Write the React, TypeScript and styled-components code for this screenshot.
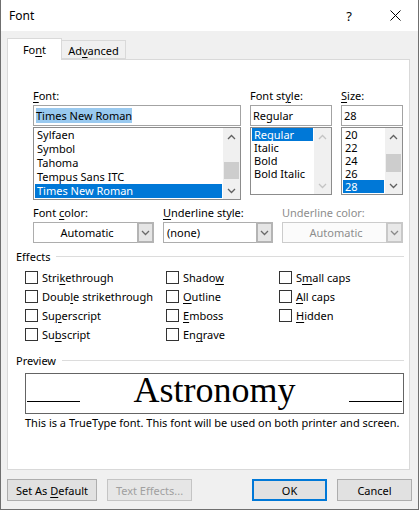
import React from "react";
import styled, { createGlobalStyle } from "styled-components";

const GlobalStyle = createGlobalStyle`
  html, body {
    margin: 0;
    padding: 0;
    background: #f0f0f0;
  }
  * {
    box-sizing: border-box;
  }
`;

const FONTS = ["Sylfaen", "Symbol", "Tahoma", "Tempus Sans ITC", "Times New Roman"];
const STYLES = ["Regular", "Italic", "Bold", "Bold Italic"];
const SIZES = ["20", "22", "24", "26", "28"];

const EFFECTS = [
  "Stri&kethrough",
  "Doub&le strikethrough",
  "Su&perscript",
  "Su&bscript",
  "Shado&w",
  "&Outline",
  "&Emboss",
  "En&grave",
  "S&mall caps",
  "&All caps",
  "&Hidden",
];

// "&" marks the access key letter, as in the Win32 resource
const withKey = (text: string) => {
  const i = text.indexOf("&");
  if (i < 0) return text;
  return (
    <>
      {text.slice(0, i)}
      <Key>{text[i + 1]}</Key>
      {text.slice(i + 2)}
    </>
  );
};

const Chevron = ({ up = false, color = "#606060" }) => (
  <svg width="9" height="6" viewBox="0 0 9 6">
    <polyline
      points={up ? "1,5 4.5,1.5 8,5" : "1,1 4.5,4.5 8,1"}
      fill="none"
      stroke={color}
      strokeWidth="1.3"
    />
  </svg>
);

const ScrollBar = ({ thumbTop = 0, thumbHeight = 0, disabled = false }) => {
  const color = disabled ? "#c4c4c4" : "#606060";
  return (
    <StyledScrollBar>
      <ArrowButton>
        <Chevron up color={color} />
      </ArrowButton>
      <Track>
        {thumbHeight > 0 && (
          <Thumb style={{ marginTop: thumbTop, height: thumbHeight }} />
        )}
      </Track>
      <ArrowButton>
        <Chevron color={color} />
      </ArrowButton>
    </StyledScrollBar>
  );
};

const ListBox = ({ items, selected, rowHeight, height, thumbTop = 0, thumbHeight = 0, disabled = false }) => (
  <StyledListBox $height={height}>
    <Items>
      {items.map((item, i) => (
        <Row key={item} $rowHeight={rowHeight} $selected={i === selected}>
          {item}
        </Row>
      ))}
    </Items>
    <ScrollBar thumbTop={thumbTop} thumbHeight={thumbHeight} disabled={disabled} />
  </StyledListBox>
);

const Combo = ({ value, centered = false, disabled = false }) => (
  <StyledCombo $disabled={disabled}>
    <ComboValue $centered={centered}>{value}</ComboValue>
    <DropButton $disabled={disabled}>
      <Chevron color={disabled ? "#8a8a8a" : "#6a6a6a"} />
    </DropButton>
  </StyledCombo>
);

export default function App() {
  return (
    <>
      <GlobalStyle />
      <Window>
        <TitleBar>
          <Title>Font</Title>
          <CaptionButton>?</CaptionButton>
          <CaptionButton>
            <svg width="11" height="11" viewBox="0 0 11 11">
              <path d="M0.5 0.5 L10.5 10.5 M10.5 0.5 L0.5 10.5" stroke="#000" strokeWidth="1" />
            </svg>
          </CaptionButton>
        </TitleBar>

        <TabStrip>
          <Tab $active>{withKey("Fo&nt")}</Tab>
          <Tab>{withKey("Ad&vanced")}</Tab>
        </TabStrip>

        <Panel>
          <FontGrid>
            <Field>
              <Label>{withKey("&Font:")}</Label>
              <TextBox>
                <Highlight>Times New Roman</Highlight>
              </TextBox>
              <ListBox items={FONTS} selected={4} rowHeight={14} height={73} thumbTop={17} thumbHeight={17} />
            </Field>
            <Field>
              <Label>{withKey("Font st&yle:")}</Label>
              <TextBox>Regular</TextBox>
              <ListBox items={STYLES} selected={0} rowHeight={13} height={68} disabled />
            </Field>
            <Field>
              <Label>{withKey("&Size:")}</Label>
              <TextBox>28</TextBox>
              <ListBox items={SIZES} selected={4} rowHeight={13} height={68} thumbTop={9} thumbHeight={18} />
            </Field>
          </FontGrid>

          <ComboGrid>
            <Field>
              <Label>{withKey("Font &color:")}</Label>
              <Combo value="Automatic" centered />
            </Field>
            <Field>
              <Label>{withKey("&Underline style:")}</Label>
              <Combo value="(none)" />
            </Field>
            <Field>
              <Label $disabled>Underline color:</Label>
              <Combo value="Automatic" centered disabled />
            </Field>
          </ComboGrid>

          <GroupHeader>
            <span>Effects</span>
            <Rule />
          </GroupHeader>
          <EffectsGrid>
            {EFFECTS.map((e) => (
              <CheckRow key={e}>
                <CheckBox />
                <span>{withKey(e)}</span>
              </CheckRow>
            ))}
          </EffectsGrid>

          <GroupHeader $gap={8}>
            <span>Preview</span>
            <Rule />
          </GroupHeader>
          <PreviewBox>
            <PreviewLine />
            <PreviewText>Astronomy</PreviewText>
            <PreviewLine />
          </PreviewBox>
          <Note>This is a TrueType font. This font will be used on both printer and screen.</Note>
        </Panel>

        <ButtonRow>
          <Button $width={90}>{withKey("Set As &Default")}</Button>
          <Button $width={85} disabled>
            Text Effects...
          </Button>
          <Spacer />
          <Button $width={75} $default>
            OK
          </Button>
          <Button $width={75}>Cancel</Button>
        </ButtonRow>
      </Window>
    </>
  );
}

const Window = styled.div`
  width: 419px;
  height: 510px;
  display: flex;
  flex-direction: column;
  background: #f0f0f0;
  border: 1px solid #6f6f6f;
  border-top: none;
  font-family: "Noto Sans", "Liberation Sans", sans-serif;
  font-size: 11px;
  color: #000;
`;

const TitleBar = styled.div`
  height: 31px;
  display: flex;
  align-items: center;
  background: #fff;
`;

const Title = styled.div`
  flex: 1;
  padding-left: 8px;
  font-size: 12px;
`;

const CaptionButton = styled.div`
  width: 46px;
  height: 31px;
  display: flex;
  align-items: center;
  justify-content: center;
  font-size: 13px;
`;

const TabStrip = styled.div`
  display: flex;
  align-items: flex-end;
  padding: 7px 0 0 6px;
`;

const Tab = styled.div<{ $active?: boolean }>`
  position: relative;
  z-index: 1;
  display: flex;
  align-items: center;
  justify-content: center;
  height: ${(p) => (p.$active ? 22 : 19)}px;
  width: ${(p) => (p.$active ? 55 : 64)}px;
  margin-bottom: ${(p) => (p.$active ? -1 : 0)}px;
  padding-top: ${(p) => (p.$active ? 0 : 1)}px;
  background: ${(p) => (p.$active ? "#fff" : "#f0f0f0")};
  border: 1px solid #d9d9d9;
  border-bottom: ${(p) => (p.$active ? "none" : "1px solid #d9d9d9")};
  border-left: ${(p) => (p.$active ? "1px solid #d9d9d9" : "none")};
`;

const Panel = styled.div`
  width: 403px;
  height: 411px;
  margin-left: 6px;
  background: #fff;
  border: 1px solid #d9d9d9;
  display: flex;
  flex-direction: column;
`;

const Key = styled.span`
  text-decoration: underline;
  text-underline-offset: 2px;
`;

const FontGrid = styled.div`
  display: grid;
  grid-template-columns: 208px 82px 62px;
  column-gap: 9px;
  align-items: start;
  margin: 28px 0 0 25px;
`;

const ComboGrid = styled.div`
  display: grid;
  grid-template-columns: 121px 110px 121px;
  column-gap: 9px;
  margin: 5px 0 0 25px;
`;

const Field = styled.div`
  display: flex;
  flex-direction: column;
`;

const Label = styled.div<{ $disabled?: boolean }>`
  height: 16px;
  line-height: 16px;
  margin-bottom: 1px;
  color: ${(p) => (p.$disabled ? "#8d8d8d" : "#000")};
`;

const TextBox = styled.div`
  height: 21px;
  display: flex;
  align-items: center;
  padding-left: 2px;
  border: 1px solid #a3a3a3;
  background: #fff;
  white-space: nowrap;
`;

const Highlight = styled.span`
  background: #99c9ef;
  line-height: 15px;
`;

const StyledListBox = styled.div<{ $height: number }>`
  height: ${(p) => p.$height}px;
  margin-top: 1px;
  display: flex;
  border: 1px solid #8c8c8c;
  background: #fff;
`;

const Items = styled.div`
  flex: 1;
  min-width: 0;
  padding: 0 1px;
`;

const Row = styled.div<{ $rowHeight: number; $selected: boolean }>`
  height: ${(p) => p.$rowHeight}px;
  line-height: ${(p) => p.$rowHeight}px;
  padding-left: 2px;
  white-space: nowrap;
  overflow: hidden;
  background: ${(p) => (p.$selected ? "#0078d7" : "transparent")};
  color: ${(p) => (p.$selected ? "#fff" : "#000")};
`;

const StyledScrollBar = styled.div`
  width: 17px;
  display: flex;
  flex-direction: column;
  background: #f0f0f0;
`;

const ArrowButton = styled.div`
  height: 17px;
  display: flex;
  align-items: center;
  justify-content: center;
`;

const Track = styled.div`
  flex: 1;
  display: flex;
  flex-direction: column;
`;

const Thumb = styled.div`
  margin: 0 1px;
  background: #cdcdcd;
`;

const StyledCombo = styled.div<{ $disabled: boolean }>`
  height: 21px;
  display: flex;
  border: 1px solid ${(p) => (p.$disabled ? "#cccccc" : "#adadad")};
  background: ${(p) => (p.$disabled ? "#fbfbfb" : "#fff")};
  color: ${(p) => (p.$disabled ? "#8d8d8d" : "#000")};
`;

const ComboValue = styled.div<{ $centered: boolean }>`
  flex: 1;
  display: flex;
  align-items: center;
  justify-content: ${(p) => (p.$centered ? "center" : "flex-start")};
  padding-left: 3px;
`;

const DropButton = styled.div<{ $disabled: boolean }>`
  width: 17px;
  margin: -1px -1px -1px 0;
  display: flex;
  align-items: center;
  justify-content: center;
  background: ${(p) => (p.$disabled ? "#e8e8e8" : "#e5e5e5")};
  border: 2px solid ${(p) => (p.$disabled ? "#c8c8c8" : "#b4b4b4")};
`;

const GroupHeader = styled.div<{ $gap?: number }>`
  display: flex;
  align-items: center;
  height: 16px;
  margin: ${(p) => p.$gap ?? 5}px 5px 0 8px;
  color: #000;
`;

const Rule = styled.div`
  flex: 1;
  height: 1px;
  margin-left: 6px;
  background: #dcdcdc;
`;

const EffectsGrid = styled.div`
  display: grid;
  grid-template-columns: 141px 113px 1fr;
  grid-template-rows: repeat(4, 19px);
  grid-auto-flow: column;
  margin: 4px 0 0 17px;
`;

const CheckRow = styled.div`
  display: flex;
  align-items: center;
`;

const CheckBox = styled.div`
  width: 13px;
  height: 13px;
  margin-right: 4px;
  border: 1px solid #333;
  background: #fff;
`;

const PreviewBox = styled.div`
  height: 41px;
  margin: 5px 0 0 17px;
  width: 379px;
  display: flex;
  align-items: flex-start;
  padding: 0 1px;
  border: 1px solid #646464;
`;

const PreviewLine = styled.div`
  width: 53px;
  height: 28px;
  border-bottom: 1px solid #000;
`;

const PreviewText = styled.div`
  flex: 1;
  text-align: center;
  font-family: "Liberation Serif", "Times New Roman", serif;
  font-size: 36px;
  line-height: 32px;
`;

const Note = styled.div`
  margin: 1px 0 0 17px;
  line-height: 16px;
  white-space: nowrap;
`;

const ButtonRow = styled.div`
  display: flex;
  gap: 10px;
  margin-top: 9px;
  padding: 0 6px;
`;

const Spacer = styled.div`
  flex: 1;
`;

const Button = styled.button<{ $width: number; $default?: boolean }>`
  width: ${(p) => p.$width}px;
  height: 22px;
  padding: 0;
  font: inherit;
  color: #000;
  background: #e1e1e1;
  border: ${(p) => (p.$default ? "2px solid #0078d7" : "1px solid #adadad")};

  &:disabled {
    color: #a0a0a0;
    background: #e6e6e6;
    border-color: #c4c4c4;
  }
`;
